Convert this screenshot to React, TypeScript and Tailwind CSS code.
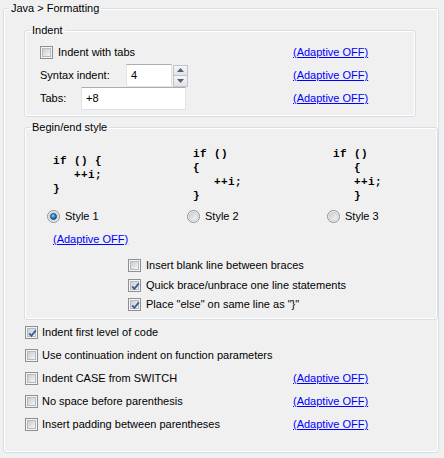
import type { ReactNode } from "react";

const font = "font-['Liberation_Sans',Arial,sans-serif]";

function CheckBox({ checked = false }: { checked?: boolean }) {
  return (
    <span className="relative block h-[13px] w-[13px] shrink-0 border border-[#8e8f8f] bg-[#f4f4f4] p-[1px]">
      <span className="block h-full w-full border border-[#b6bbc2] bg-linear-to-br from-[#c9cdd3] to-[#f5f5f5]" />
      {checked && (
        <svg className="absolute left-[1px] top-[1px]" width="11" height="11" viewBox="0 0 11 11">
          <path d="M2.2 5.4 L4.4 7.8 L8.8 2.4" fill="none" stroke="#3f5c9a" strokeWidth="1.9" />
        </svg>
      )}
    </span>
  );
}

function Radio({ checked = false }: { checked?: boolean }) {
  return (
    <svg width="13" height="13" viewBox="0 0 13 13" className="shrink-0">
      <defs>
        <linearGradient id="rg" x1="0" y1="0" x2="1" y2="1">
          <stop offset="0" stopColor="#c8ccd2" />
          <stop offset="1" stopColor="#f8f8f8" />
        </linearGradient>
        <radialGradient id="rd" cx="0.4" cy="0.35" r="0.7">
          <stop offset="0" stopColor="#8fd3ff" />
          <stop offset="0.5" stopColor="#1a8ee0" />
          <stop offset="1" stopColor="#0d4b8c" />
        </radialGradient>
      </defs>
      <circle cx="6.5" cy="6.5" r="6" fill="#f4f4f4" stroke="#8e8f8f" />
      <circle cx="6.5" cy="6.5" r="4.3" fill="url(#rg)" stroke="#c3c6cb" strokeWidth="0.8" />
      {checked && <circle cx="6.5" cy="6.5" r="3" fill="url(#rd)" stroke="#1e395b" strokeWidth="0.8" />}
    </svg>
  );
}

function Link() {
  return <span className="whitespace-nowrap text-[#0000ff] underline">(Adaptive OFF)</span>;
}

function Group({ title, className, children }: { title: string; className: string; children: ReactNode }) {
  return (
    <fieldset
      className={`rounded-[3px] border border-[#d5dfe5] p-0 shadow-[inset_0_0_0_1px_#ffffff] ${className}`}
    >
      <legend className="ml-[5px] px-[2px] leading-[13px]">{title}</legend>
      {children}
    </fieldset>
  );
}

function Code({ lines }: { lines: string[] }) {
  return (
    <div className="flex h-[56px] flex-col justify-center pl-[6px] font-['Liberation_Mono','Courier_New',monospace] text-[11px] font-bold leading-[14px] tracking-[0.4px]">
      {lines.map((l, i) => (
        <div key={i} className="whitespace-pre">
          {l}
        </div>
      ))}
    </div>
  );
}

const styles = [
  { label: "Style 1", checked: true, lines: ["if () {", "   ++i;", "}"] },
  { label: "Style 2", checked: false, lines: ["if ()", "{", "   ++i;", "}"] },
  { label: "Style 3", checked: false, lines: ["if ()", "   {", "   ++i;", "   }"] },
];

const braceOptions = [
  { label: "Insert blank line between braces", checked: false },
  { label: "Quick brace/unbrace one line statements", checked: true },
  { label: 'Place "else" on same line as "}"', checked: true },
];

const bottomOptions = [
  { label: "Indent first level of code", checked: true, link: false },
  { label: "Use continuation indent on function parameters", checked: false, link: false },
  { label: "Indent CASE from SWITCH", checked: false, link: true },
  { label: "No space before parenthesis", checked: false, link: true },
  { label: "Insert padding between parentheses", checked: false, link: true },
];

export default function App() {
  return (
    <div className={`h-[458px] w-[444px] bg-[#f0f0f0] pl-[3px] pt-[2px] text-[11px] leading-[13px] text-black ${font}`}>
      <Group title="Java > Formatting" className="h-[451px] w-[436px]">
        <div className="pl-[20px]">
          <Group title="Indent" className="mt-[9px] h-[93px] w-[392px]">
            <div className="pl-[15px] pt-[4px]">
              <div className="flex h-[23px] items-center">
                <div className="flex w-[253px] items-center gap-[5px]">
                  <CheckBox />
                  <span>Indent with tabs</span>
                </div>
                <Link />
              </div>
              <div className="flex h-[23px] items-center">
                <div className="flex w-[253px] items-center">
                  <span className="w-[86px]">Syntax indent:</span>
                  <div className="flex h-[23px] w-[46px] items-center border border-[#e2e3ea] border-t-[#abadb3] bg-white pl-[4px]">
                    4
                  </div>
                  <div className="ml-[1px] flex h-[22px] w-[15px] flex-col">
                    <div className="flex h-[11px] items-center justify-center border border-[#c2c5ca] bg-linear-to-b from-[#f6f6f6] to-[#e2e2e2]">
                      <svg width="7" height="4" viewBox="0 0 7 4">
                        <path d="M0 4 L3.5 0 L7 4 Z" fill="#4d6185" />
                      </svg>
                    </div>
                    <div className="flex h-[11px] items-center justify-center border border-t-0 border-[#c2c5ca] bg-linear-to-b from-[#f6f6f6] to-[#e2e2e2]">
                      <svg width="7" height="4" viewBox="0 0 7 4">
                        <path d="M0 0 L3.5 4 L7 0 Z" fill="#4d6185" />
                      </svg>
                    </div>
                  </div>
                </div>
                <Link />
              </div>
              <div className="flex h-[23px] items-center">
                <div className="flex w-[253px] items-center">
                  <span className="w-[41px]">Tabs:</span>
                  <div className="flex h-[23px] w-[105px] items-center border border-[#e2e3ea] border-t-[#abadb3] bg-white pl-[4px]">
                    +8
                  </div>
                </div>
                <Link />
              </div>
            </div>
          </Group>

          <Group title="Begin/end style" className="mt-[4px] h-[199px] w-[392px]">
            <div className="pt-[13px]">
              <div className="grid grid-cols-[140px_140px_110px] pl-[22px]">
                {styles.map((s) => (
                  <div key={s.label}>
                    <Code lines={s.lines} />
                    <div className="flex h-[27px] items-center gap-[5px]">
                      <Radio checked={s.checked} />
                      <span>{s.label}</span>
                    </div>
                  </div>
                ))}
              </div>
              <div className="flex h-[18px] items-center pl-[28px]">
                <Link />
              </div>
              <div className="mt-[8px] pl-[103px]">
                {braceOptions.map((o) => (
                  <div key={o.label} className="flex h-[19.5px] items-center gap-[5px]">
                    <CheckBox checked={o.checked} />
                    <span>{o.label}</span>
                  </div>
                ))}
              </div>
            </div>
          </Group>

          <div className="pl-[1px] pt-[1px]">
            {bottomOptions.map((o) => (
              <div key={o.label} className="flex h-[23px] items-center">
                <div className="flex w-[268px] items-center gap-[4px]">
                  <CheckBox checked={o.checked} />
                  <span className="whitespace-nowrap">{o.label}</span>
                </div>
                {o.link && <Link />}
              </div>
            ))}
          </div>
        </div>
      </Group>
    </div>
  );
}
